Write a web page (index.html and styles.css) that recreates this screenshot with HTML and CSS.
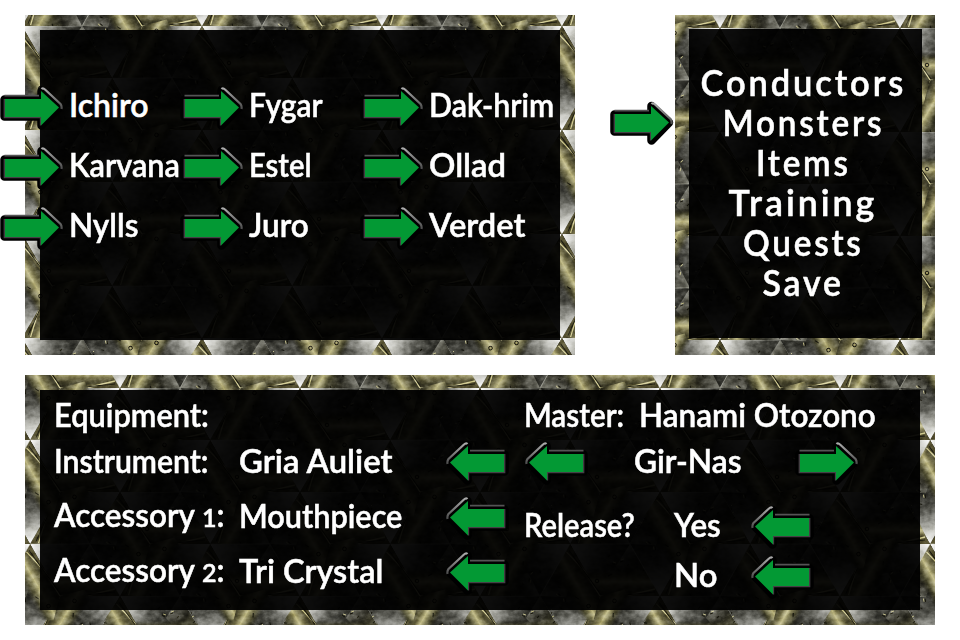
FILE: index.html
```html
<!DOCTYPE html>
<html lang="en">
<head>
<meta charset="utf-8">
<title>Conductors</title>
<link rel="stylesheet" href="styles.css">
</head>
<body>
<svg class="defs" width="0" height="0">
  <defs>
    <linearGradient id="rod" x1="0" y1="-28" x2="0" y2="-3" gradientUnits="userSpaceOnUse">
      <stop offset="0" stop-color="#24231a" stop-opacity="0"/><stop offset=".25" stop-color="#4c4a30"/>
      <stop offset=".55" stop-color="#c2bc88"/><stop offset=".72" stop-color="#78734c"/><stop offset="1" stop-color="#3a3825"/>
    </linearGradient>
    <linearGradient id="facet" x1="-30" y1="-52" x2="28" y2="-30" gradientUnits="userSpaceOnUse">
      <stop offset="0" stop-color="#fff"/><stop offset=".22" stop-color="#c4c4bd"/>
      <stop offset=".55" stop-color="#55554e"/><stop offset="1" stop-color="#1b1b16"/>
    </linearGradient>
    <linearGradient id="plate" x1="26" y1="-52" x2="58" y2="-20" gradientUnits="userSpaceOnUse">
      <stop offset="0" stop-color="#8b8b80"/><stop offset=".45" stop-color="#2a2920"/><stop offset="1" stop-color="#6b6741"/>
    </linearGradient>
    <filter id="grain" x="0" y="0" width="1" height="1" color-interpolation-filters="sRGB">
      <feTurbulence type="fractalNoise" baseFrequency=".14 .18" numOctaves="3" seed="8" result="n"/>
      <feColorMatrix in="n" values=".8 0 0 0 .12  .8 0 0 0 .12  .8 0 0 0 .12  0 0 0 0 1" result="g"/>
      <feBlend in="g" in2="SourceGraphic" mode="soft-light"/>
    </filter>
    <g id="sector">
      <path d="M0 0L60 0L30-52L-30-52Z" fill="url(#facet)"/>
      <path d="M30-52L60 0L38-6L16-30Z" fill="url(#plate)"/>
      <path d="M-12-28L46-28L58-3L0 0L-18-18Z" fill="url(#rod)"/>
      <path d="M0 0L60 0L55-7Z" fill="#555030"/>
      <path d="M0 0L30-1L55-7" fill="none" stroke="#d5cf98" stroke-width="1.3"/>
      <path d="M0 1.500L55-4" fill="none" stroke="#1c1b10" stroke-width="1"/>
      <path d="M12-33l3 2m-7-8l2-2m10 7l3-1m4 5l2-2m14 7l2-2m-4-7l1-2m-34 16l4-2" stroke="#17160d" stroke-width="1.1"/>
      <path d="M13-34l3 1m5-3l3-1m18 6l2-1m-3-6l1-1" stroke="#cfc994" stroke-width=".9"/>
      <circle cx="-3" cy="-15" r="1.8" fill="#aaa36c" stroke="#1b1910"/>
      <path d="M-30-52L30-52" stroke="#ddddd0" stroke-width=".8" opacity=".55"/>
    </g>
    <g id="hex">
      <use href="#sector"/><use href="#sector" transform="rotate(120)"/><use href="#sector" transform="rotate(240)"/>
    </g>
    <g id="tile">
      <use href="#hex"/><use href="#hex" x="180"/><use href="#hex" y="104"/><use href="#hex" x="180" y="104"/><use href="#hex" x="90" y="52"/>
    </g>
    <pattern id="metal1" x="117" y="11" width="180" height="104" patternUnits="userSpaceOnUse"><use href="#tile"/></pattern>
    <pattern id="metal2" x="-15" y="13" width="180" height="104" patternUnits="userSpaceOnUse"><use href="#tile"/></pattern>
    <pattern id="metal3" x="35" y="13" width="180" height="104" patternUnits="userSpaceOnUse"><use href="#tile"/></pattern>
    <linearGradient id="shine" x1="0" y1="0" x2="0" y2="1">
      <stop offset="0" stop-color="#aaa"/><stop offset="1" stop-color="#4b4b4b"/>
    </linearGradient>
    <symbol id="arrow" viewBox="0 0 64 44">
      <path d="M4.5 13.5H41.5V5L59 21.5L41.5 39.5V30.5H4.5Z" fill="#000" stroke="#000" stroke-width="8.5" stroke-linejoin="round"/>
      <path d="M4.500 9.700H39" stroke="#555455" stroke-width="1.8"/>
      <path d="M41.500 3Q43 1.500 45 3.500L60.500 18Q62 20 61.500 23" fill="none" stroke="url(#shine)" stroke-width="2.2"/>
      <path d="M4.300 13V31.500H40.500V39.500" fill="none" stroke="#454045" stroke-width="1.3"/>
      <path d="M5 13H41V5L59 21.500L41 39.500V31H5Z" fill="#039934"/>
    </symbol>
  </defs>
</svg>
<main class="screen">
  <div class="top">
    <section class="panel party">
      <svg class="metal"><rect width="550" height="340" fill="url(#metal1)" filter="url(#grain)"/></svg>
      <div class="inner roster">
        <div class="member"><svg class="arrow"><use href="#arrow"/></svg><span data-w="80">Ichiro</span></div>
        <div class="member"><svg class="arrow"><use href="#arrow"/></svg><span data-w="74">Fygar</span></div>
        <div class="member"><svg class="arrow"><use href="#arrow"/></svg><span data-w="125">Dak-hrim</span></div>
        <div class="member"><svg class="arrow"><use href="#arrow"/></svg><span data-w="111">Karvana</span></div>
        <div class="member"><svg class="arrow"><use href="#arrow"/></svg><span data-w="63">Estel</span></div>
        <div class="member"><svg class="arrow"><use href="#arrow"/></svg><span data-w="77">Ollad</span></div>
        <div class="member"><svg class="arrow"><use href="#arrow"/></svg><span data-w="69">Nylls</span></div>
        <div class="member"><svg class="arrow"><use href="#arrow"/></svg><span data-w="60">Juro</span></div>
        <div class="member"><svg class="arrow"><use href="#arrow"/></svg><span data-w="96">Verdet</span></div>
      </div>
    </section>
    <svg class="arrow cursor"><use href="#arrow"/></svg>
    <section class="panel menu">
      <svg class="metal"><rect width="260" height="340" fill="url(#metal2)" filter="url(#grain)"/></svg>
      <nav class="inner commands">
        <span data-w="206">Conductors</span>
        <span data-w="162">Monsters</span>
        <span data-w="95">Items</span>
        <span data-w="149">Training</span>
        <span data-w="121">Quests</span>
        <span data-w="81">Save</span>
      </nav>
    </section>
  </div>
  <section class="panel details">
    <svg class="metal"><rect width="910" height="250" fill="url(#metal3)" filter="url(#grain)"/></svg>
    <div class="inner columns">
      <div class="equipment">
        <div class="row short"><span data-w="155">Equipment:</span></div>
        <div class="row"><span class="label"><span data-w="155">Instrument:</span></span><span class="value"><span data-w="154">Gria Auliet</span></span><svg class="arrow left"><use href="#arrow"/></svg></div>
        <div class="row"><span class="label"><span data-w="171">Accessory <small>1</small>:</span></span><span class="value"><span data-w="163">Mouthpiece</span></span><svg class="arrow left"><use href="#arrow"/></svg></div>
        <div class="row"><span class="label"><span data-w="171">Accessory <small>2</small>:</span></span><span class="value"><span data-w="144">Tri Crystal</span></span><svg class="arrow left"><use href="#arrow"/></svg></div>
      </div>
      <div class="monster">
        <div class="row short"><span class="master"><span data-w="100">Master:</span></span><span data-w="237">Hanami Otozono</span></div>
        <div class="row picker"><svg class="arrow left"><use href="#arrow"/></svg><span class="name"><span data-w="108">Gir-Nas</span></span><svg class="arrow"><use href="#arrow"/></svg></div>
        <div class="row choice first"><span class="ask"><span data-w="111">Release?</span></span><span class="option"><span data-w="47">Yes</span></span><svg class="arrow left"><use href="#arrow"/></svg></div>
        <div class="row choice"><span class="ask"></span><span class="option"><span data-w="43">No</span></span><svg class="arrow left"><use href="#arrow"/></svg></div>
      </div>
    </div>
  </section>
</main>
<script src="fit.js"></script>
</body>
</html>
```
FILE: styles.css
```css
* { box-sizing: border-box; }
body { margin: 0; background: #fff; }
.defs { display: block; height: 0; }
.screen {
  width: 960px;
  height: 640px;
  padding: 15px 25px;
  display: flex;
  flex-direction: column;
  gap: 20px;
  overflow: hidden;
  color: #fff;
  font: 600 32px/44px Lato, "Open Sans", sans-serif;
  -webkit-text-stroke: .5px #fff;
}
.top { display: flex; height: 340px; }
.panel { display: grid; flex: none; padding: 15px; }
.party { width: 550px; height: 340px; }
.menu { width: 260px; height: 340px; padding: 14px 13px 17px 14px; }
.details { width: 910px; height: 250px; }
.metal {
  grid-area: 1 / 1;
  width: calc(100% + 30px);
  height: calc(100% + 30px);
  margin: -15px;
  display: block;
}
.menu .metal { width: 260px; height: 340px; margin: -14px -13px -17px -14px; }
.inner { grid-area: 1 / 1; z-index: 1; background: rgba(0, 0, 0, .94); min-width: 0; min-height: 0; }
[data-w] { display: inline-block; white-space: nowrap; transform-origin: 0 50%; }
.arrow { display: block; flex: none; width: 64px; height: 44px; }
.left { transform: scaleX(-1); }
.cursor { margin: 86px -13px 0 35px; position: relative; }
.cursor + .menu { margin-left: 14px; }
.roster {
  display: grid;
  grid-template-columns: repeat(3, 180px);
  grid-auto-rows: 60px;
  padding-top: 48px;
}
.member { display: flex; align-items: center; gap: 5px; margin-left: -40px; width: 180px; }
.member span { margin-top: -6px; }
.commands {
  display: flex;
  flex-direction: column;
  align-items: center;
  padding-top: 33px;
  padding-right: 5px;
  font-size: 36px;
  line-height: 40px;
  letter-spacing: 3px;
}
.commands span { transform-origin: 50% 50%; }
.columns { display: grid; grid-template-columns: 484px 1fr; }
.row { display: flex; align-items: center; height: 55px; }
.row > span { margin-top: -4px; }
.short { height: 45px; padding-top: 9px; }
.equipment { padding-left: 14px; }
.label { width: 185px; }
.value { width: 207px; }
.equipment .arrow { margin-left: -1px; }
small { font-size: .8em; }
.master { width: 115px; }
.picker .arrow.left { margin-left: 0; }
.name { width: 161px; padding-left: 46px; }
.picker .arrow:last-child { margin-left: 46px; }
.choice { height: 50px; }
.first { margin-top: 12px; }
.ask { width: 150px; }
.option { width: 76px; }
```
FILE: fit.js
```js
// Condense or widen each label to its designed width.
document.querySelectorAll("[data-w]").forEach((el) => {
  el.style.transform = `scaleX(${el.dataset.w / el.offsetWidth})`;
});
```
